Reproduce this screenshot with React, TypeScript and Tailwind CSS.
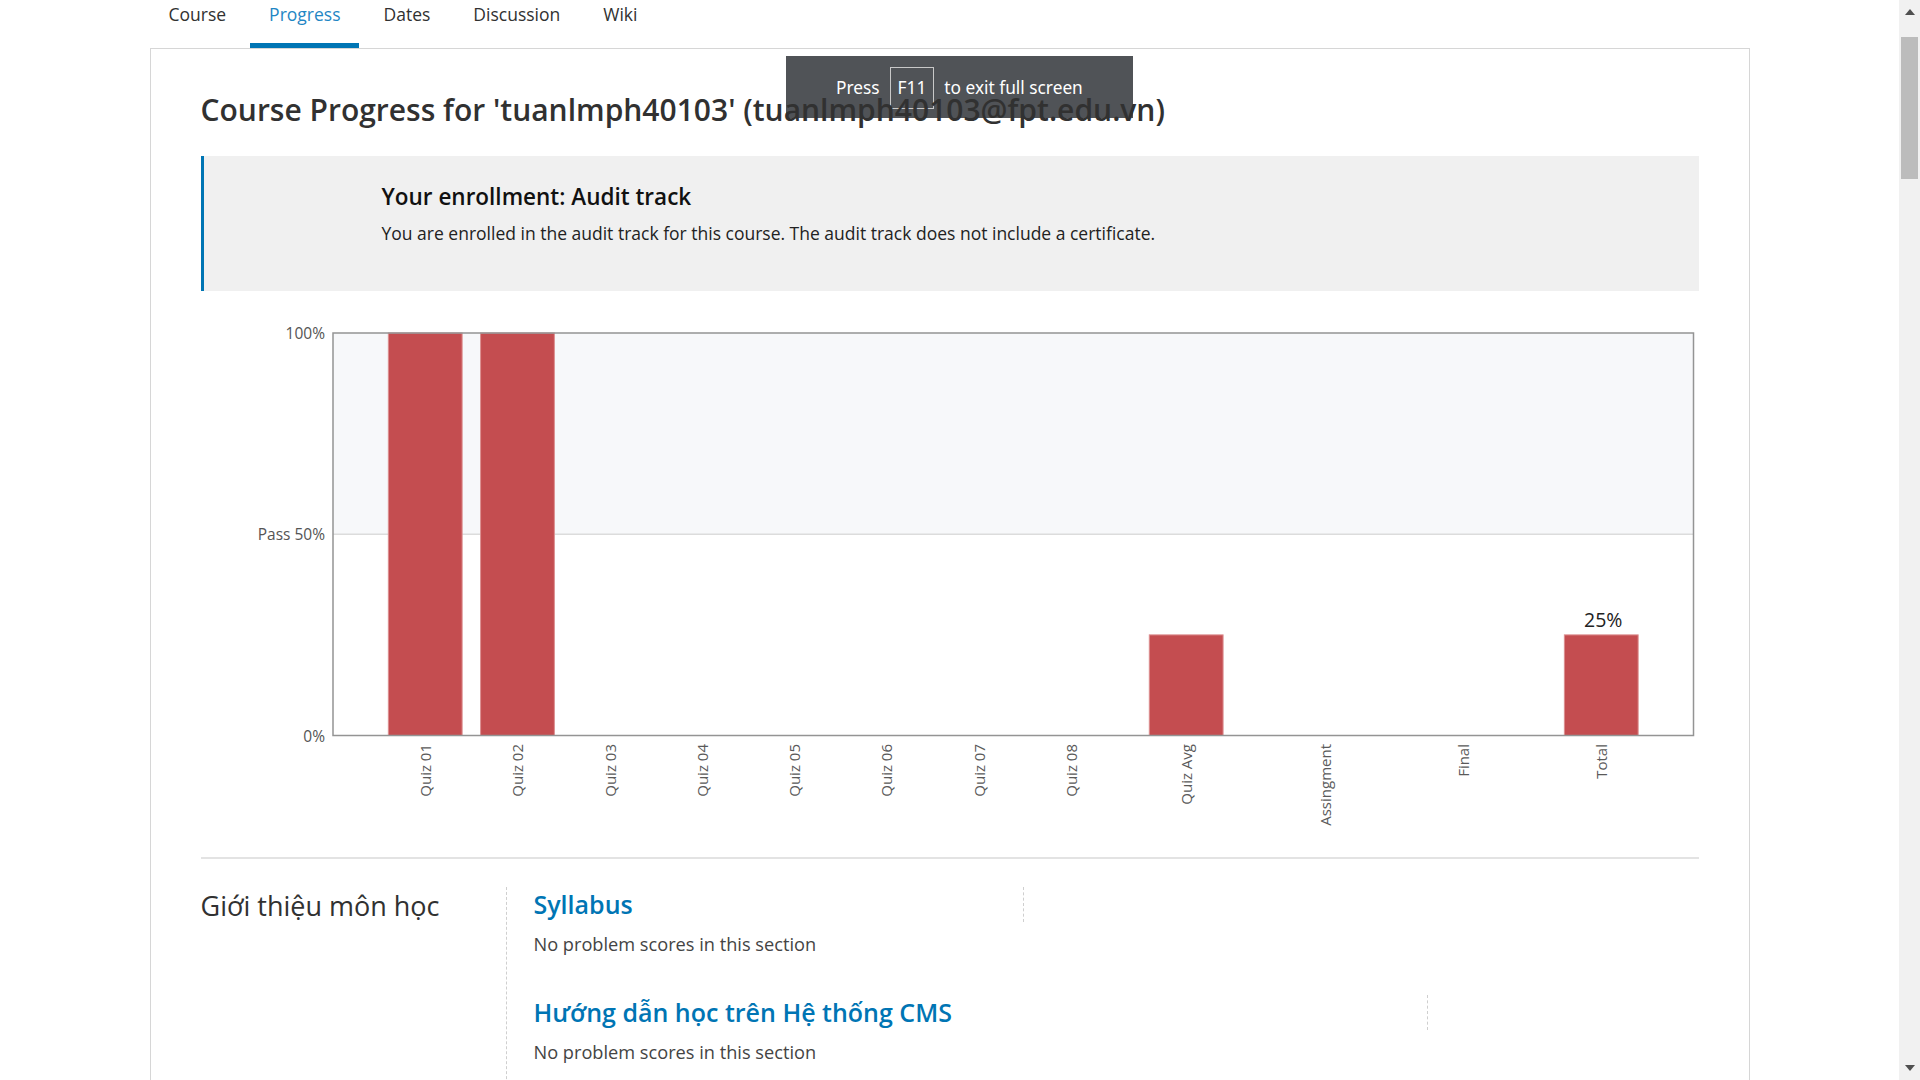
import React from "react";

const cats: { label: string; p: number; v: number }[] = [
  { label: "Quiz 01", p: 1, v: 100 },
  { label: "Quiz 02", p: 2, v: 100 },
  { label: "Quiz 03", p: 3, v: 0 },
  { label: "Quiz 04", p: 4, v: 0 },
  { label: "Quiz 05", p: 5, v: 0 },
  { label: "Quiz 06", p: 6, v: 0 },
  { label: "Quiz 07", p: 7, v: 0 },
  { label: "Quiz 08", p: 8, v: 0 },
  { label: "Quiz Avg", p: 9.25, v: 25 },
  { label: "Assingment", p: 10.75, v: 0 },
  { label: "Final", p: 12.25, v: 0 },
  { label: "Total", p: 13.75, v: 25 },
];

function Chart() {
  const x0 = 132;
  const x1 = 1492.5;
  const y0 = 32;
  const y1 = 434.5;
  const u = (x1 - x0) / 14.75;
  const h = y1 - y0;
  const ymid = y0 + h / 2;
  const font = "'Open Sans', sans-serif";
  return (
    <svg width="1498" height="556" className="mt-[10px] block">
      <rect x={x0} y={y0} width={x1 - x0} height={ymid - y0} fill="#f7f8fa" />
      <line x1={x0} x2={x1} y1={ymid} y2={ymid} stroke="#dcdcdc" strokeWidth="1.5" />
      {cats.map((c) => {
        if (c.v <= 0) return null;
        const bx = x0 + (c.p - 0.4) * u;
        const bh = (h * c.v) / 100;
        return (
          <rect
            key={c.label}
            x={bx}
            y={y1 - bh}
            width={0.8 * u}
            height={bh}
            fill="#c44d50"
            stroke="#dc8f90"
            strokeWidth="1"
          />
        );
      })}
      <rect x={x0} y={y0} width={x1 - x0} height={h} fill="none" stroke="#949494" strokeWidth="1.5" />
      <text x="124" y={y0} textAnchor="end" dominantBaseline="central" fontFamily={font} fontSize="15.5" fill="#545454">100%</text>
      <text x="124" y={ymid} textAnchor="end" dominantBaseline="central" fontFamily={font} fontSize="15.5" fill="#545454">Pass 50%</text>
      <text x="124" y={y1} textAnchor="end" dominantBaseline="central" fontFamily={font} fontSize="15.5" fill="#545454">0%</text>
      {cats.map((c) => {
        const cx = x0 + c.p * u;
        return (
          <text
            key={"l" + c.label}
            x={cx}
            y={443}
            transform={`rotate(-90 ${cx} 443)`}
            textAnchor="end"
            dominantBaseline="central"
            fontFamily={font}
            fontSize="15"
            fill="#5a5a5a"
          >
            {c.label}
          </text>
        );
      })}
      <text x={x0 + 13.75 * u + 2} y={326} textAnchor="middle" fontFamily={font} fontSize="19.5" fill="#222">25%</text>
    </svg>
  );
}

function Scrollbar() {
  return (
    <div className="flex h-full w-[21px] shrink-0 flex-col bg-[#f1f1f1]">
      <div className="flex h-[21px] items-center justify-center pt-[3px]">
        <svg width="10" height="6" viewBox="0 0 10 6">
          <polygon points="5,0 10,6 0,6" fill="#505050" />
        </svg>
      </div>
      <div className="ml-[2px] mt-[16px] h-[142px] w-[17px] bg-[#bcbcbc]" />
      <div className="flex-1" />
      <div className="flex h-[21px] items-center justify-center pb-[3px]">
        <svg width="10" height="6" viewBox="0 0 10 6">
          <polygon points="0,0 10,0 5,6" fill="#505050" />
        </svg>
      </div>
    </div>
  );
}

export default function App() {
  const tabs = ["Course", "Progress", "Dates", "Discussion", "Wiki"];
  return (
    <div className="flex h-screen w-full overflow-hidden bg-white font-['Open_Sans',sans-serif]">
      <div className="relative flex-1 overflow-hidden">
        <div className="absolute left-[786px] top-[56px] flex h-[62px] items-center bg-[#505357] px-[50px] pt-[2px] text-[17.3px] text-white font-['Noto_Sans',sans-serif]">
          <span>Press</span>
          <span className="mx-[10px] flex h-[42px] items-center border border-[#c8c8c8] px-[7px]">F11</span>
          <span>to exit full screen</span>
        </div>
        <div className="mx-auto w-[1600px]">
          <nav className="flex h-[48px] gap-[5px]">
            {tabs.map((t) => (
              <a
                key={t}
                className={
                  t === "Progress"
                    ? "block h-[48px] border-b-[5px] border-[#0075b4] px-[19px] pt-[2px] text-[17.5px] leading-[24px] text-[#1f86c4]"
                    : "block h-[48px] px-[19px] pt-[2px] text-[17.5px] leading-[24px] text-[#313131]"
                }
              >
                {t}
              </a>
            ))}
          </nav>
          <div className="min-h-[1100px] border-x border-t border-[#d6d6d6] px-[50px]">
            <h1 className="relative mt-[43px] text-[30px] font-semibold leading-[36px] text-[#313131]">
              Course Progress for 'tuanlmph40103' (tuanlmph40103@fpt.edu.vn)
            </h1>
            <div className="mt-[28px] h-[135px] border-l-[3px] border-[#0075b4] bg-[#f0f0f0] pl-[178px] pt-[27px]">
              <h3 className="text-[22.5px] font-semibold leading-[28px] text-[#111]">Your enrollment: Audit track</h3>
              <p className="mt-[9px] text-[17.5px] leading-[26px] text-[#222]">
                You are enrolled in the audit track for this course. The audit track does not include a certificate.
              </p>
            </div>
            <Chart />
            <div className="h-[2px] bg-[#e3e3e3]" />
            <div className="mt-[28px] flex">
              <div className="w-[305px] shrink-0 pt-[3px]">
                <h2 className="text-[27px] leading-[32px] text-[#313131]">Giới thiệu môn học</h2>
              </div>
              <div className="flex-1 border-l border-dashed border-[#cfcfcf] pl-[27px] pb-[40px]">
                <div className="h-[35px] w-[490px] border-r border-dashed border-[#cfcfcf] pt-[2px]">
                  <h3 className="text-[25px] font-semibold leading-[31px] text-[#0075b4]">Syllabus</h3>
                </div>
                <p className="mt-[10px] text-[18.2px] font-medium leading-[24px] text-[#444]">No problem scores in this section</p>
                <div className="mt-[39px] h-[35px] w-[894px] border-r border-dashed border-[#cfcfcf] pt-[2px]">
                  <h3 className="text-[25px] font-semibold leading-[31px] text-[#0075b4]">Hướng dẫn học trên Hệ thống CMS</h3>
                </div>
                <p className="mt-[10px] text-[18.2px] font-medium leading-[24px] text-[#444]">No problem scores in this section</p>
              </div>
            </div>
          </div>
        </div>
      </div>
      <Scrollbar />
    </div>
  );
}
